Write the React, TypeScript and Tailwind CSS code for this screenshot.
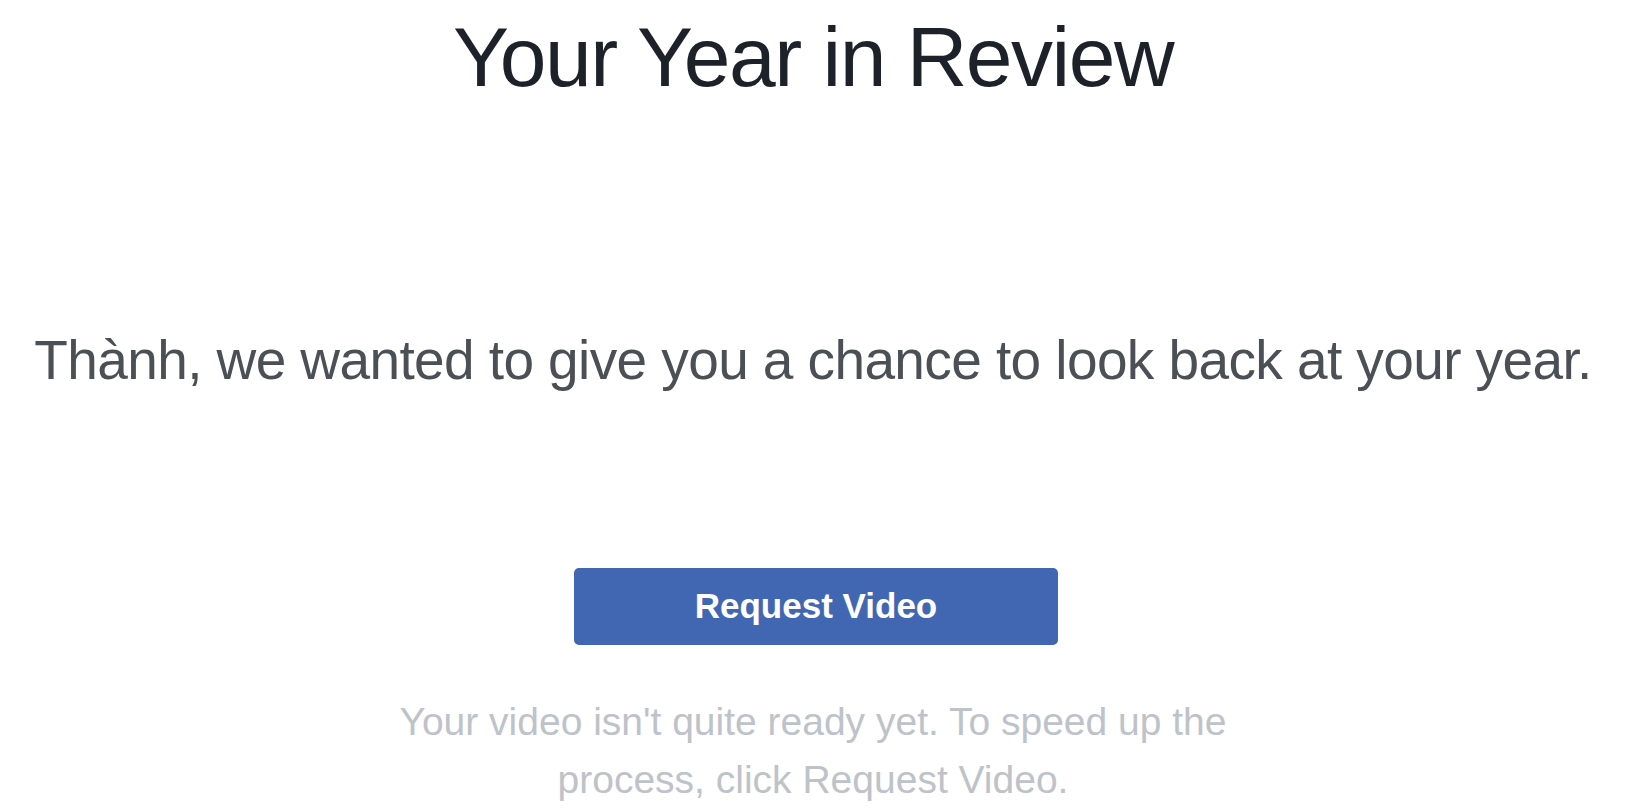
export default function App() {
  return (
    <div className="flex min-h-screen flex-col items-center bg-white font-['Liberation_Sans',Arial,sans-serif]">
      <h1 className="mt-[15px] text-[84px] leading-none font-normal tracking-[-1.5px] text-[#1d2129]">
        Your Year in Review
      </h1>
      <p className="mt-[234px] text-[55px] leading-none tracking-[-0.6px] whitespace-nowrap text-[#4b4f56]">
        Thành, we wanted to give you a chance to look back at your year.
      </p>
      <button
        type="button"
        className="mt-[180px] ml-[6px] h-[77px] w-[484px] rounded-[5px] bg-[#4267b2] text-[35px] font-bold text-white"
      >
        Request Video
      </button>
      <p className="mt-[48px] max-w-[870px] text-center text-[39px] leading-[58px] text-[#bec2c9]">
        Your video isn't quite ready yet. To speed up the process, click Request Video.
      </p>
    </div>
  );
}
